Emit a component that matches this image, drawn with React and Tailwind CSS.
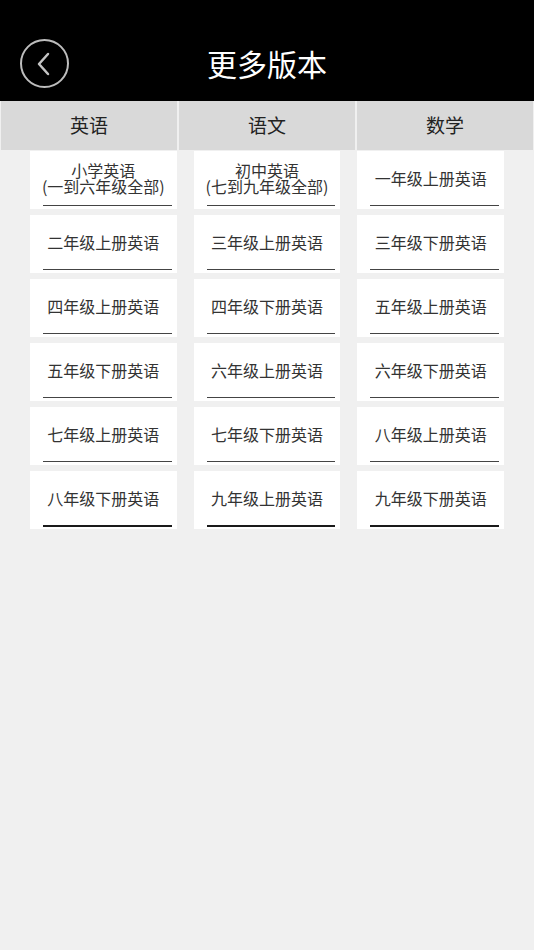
import React from 'react';

const tabs = ['英语', '语文', '数学'];

const books = [
    '小学英语\n(一到六年级全部)',
    '初中英语\n(七到九年级全部)',
    '一年级上册英语',
    '二年级上册英语',
    '三年级上册英语',
    '三年级下册英语',
    '四年级上册英语',
    '四年级下册英语',
    '五年级上册英语',
    '五年级下册英语',
    '六年级上册英语',
    '六年级下册英语',
    '七年级上册英语',
    '七年级下册英语',
    '八年级上册英语',
    '八年级下册英语',
    '九年级上册英语',
    '九年级下册英语',
];

const BookCell = ({ title, last }) => (
    <div className="bg-white h-[58px] flex flex-col">
        <div className="flex-1 flex items-center justify-center">
            <p className="text-center whitespace-pre-line text-[16px] leading-[16px] text-[#333]">
                {title}
            </p>
        </div>
        <div
            className={
                last
                    ? 'ml-[13px] mr-[5px] h-[2px] bg-[#1a1a1a] mb-[2px]'
                    : 'ml-[13px] mr-[5px] h-px bg-[#444] mb-[3px]'
            }
        />
    </div>
);

const App = () => {
    return (
        <div
            className="w-[534px] h-[950px] bg-[#f0f0f0] flex flex-col"
            style={{ fontFamily: '"Noto Sans CJK SC", "Noto Sans", sans-serif' }}
        >
            {/* header */}
            <div className="h-[101px] bg-black flex items-end pb-[13px] relative">
                <button className="ml-[20px] w-[49px] h-[49px] rounded-full border-[2.5px] border-[#bdbdbd] flex items-center justify-center">
                    <svg width="22" height="26" viewBox="0 0 22 26" fill="none">
                        <path d="M14 3 L5 13 L14 23" stroke="#c4c4c4" strokeWidth="2.5" strokeLinecap="round" strokeLinejoin="round" />
                    </svg>
                </button>
                <h1 className="absolute left-0 right-0 bottom-[20px] text-center text-white text-[30px] leading-[36px]">
                    更多版本
                </h1>
            </div>

            {/* subject tabs */}
            <div className="grid grid-cols-3 gap-[2px] px-px">
                {tabs.map((tab) => (
                    <div
                        key={tab}
                        className="h-[49px] bg-[#d9d9d9] flex items-center justify-center text-[19px] text-[#222]"
                    >
                        {tab}
                    </div>
                ))}
            </div>

            {/* book list */}
            <div className="grid grid-cols-3 gap-x-[17px] gap-y-[6px] pl-[30px] pr-[30px] pt-px">
                {books.map((title, i) => (
                    <BookCell key={title} title={title} last={i >= 15} />
                ))}
            </div>
        </div>
    );
};

export default App;
